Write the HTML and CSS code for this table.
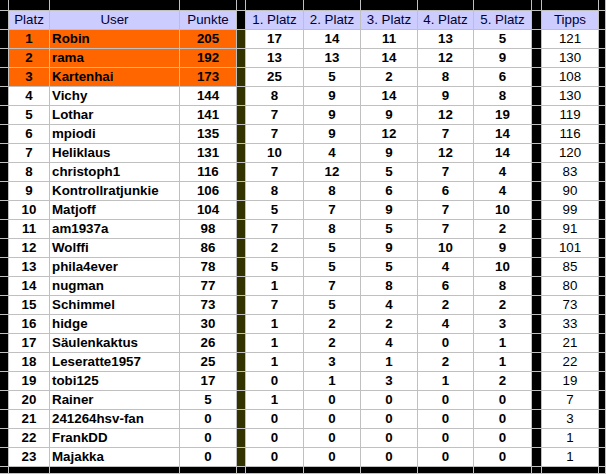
FILE: index.html
```html
<!DOCTYPE html>
<html lang="de">
<head>
<meta charset="utf-8">
<title>Tippspiel Rangliste</title>
<link rel="stylesheet" href="styles.css">
</head>
<body>
<div class="sheet" id="sheet">
  <!-- top band -->
  <div class="bk"></div><div class="bk"></div><div class="bk"></div><div class="bk"></div><div class="bk"></div><div class="bk"></div><div class="bk"></div><div class="bk"></div><div class="bk"></div><div class="bk"></div><div class="bk"></div><div class="bk"></div><div class="bk"></div>
  <!-- header -->
  <div class="bk"></div>
  <div class="hd c">Platz</div>
  <div class="hd c">User</div>
  <div class="hd c">Punkte</div>
  <div class="bk"></div>
  <div class="hd c">1. Platz</div>
  <div class="hd c">2. Platz</div>
  <div class="hd c">3. Platz</div>
  <div class="hd c">4. Platz</div>
  <div class="hd c">5. Platz</div>
  <div class="bk"></div>
  <div class="hd c">Tipps</div>
  <div class="bk"></div>
</div>
<script src="app.js"></script>
</body>
</html>
```

FILE: app.js
```js
var rows = [
  [1,"Robin",205,17,14,11,13,5,121],
  [2,"rama",192,13,13,14,12,9,130],
  [3,"Kartenhai",173,25,5,2,8,6,108],
  [4,"Vichy",144,8,9,14,9,8,130],
  [5,"Lothar",141,7,9,9,12,19,119],
  [6,"mpiodi",135,7,9,12,7,14,116],
  [7,"Heliklaus",131,10,4,9,12,14,120],
  [8,"christoph1",116,7,12,5,7,4,83],
  [9,"Kontrollratjunkie",106,8,8,6,6,4,90],
  [10,"Matjoff",104,5,7,9,7,10,99],
  [11,"am1937a",98,7,8,5,7,2,91],
  [12,"Wolffi",86,2,5,9,10,9,101],
  [13,"phila4ever",78,5,5,5,4,10,85],
  [14,"nugman",77,1,7,8,6,8,80],
  [15,"Schimmel",73,7,5,4,2,2,73],
  [16,"hidge",30,1,2,2,4,3,33],
  [17,"Säulenkaktus",26,1,2,4,0,1,21],
  [18,"Leseratte1957",25,1,3,1,2,1,22],
  [19,"tobi125",17,0,1,3,1,2,19],
  [20,"Rainer",5,1,0,0,0,0,7],
  [21,"241264hsv-fan",0,0,0,0,0,0,3],
  [22,"FrankDD",0,0,0,0,0,0,1],
  [23,"Majakka",0,0,0,0,0,0,1]
];
var sheet = document.getElementById("sheet");
function cell(cls, text) {
  var d = document.createElement("div");
  d.className = cls;
  if (text !== undefined) d.textContent = text;
  sheet.appendChild(d);
}
rows.forEach(function (r) {
  var bg = r[0] <= 3 ? "or" : "wh";
  cell("bk");
  cell(bg + " c b", r[0]);
  cell(bg + " l b", r[1]);
  cell(bg + " c b", r[2]);
  cell("ol");
  for (var i = 3; i < 8; i++) cell("wh c b", r[i]);
  cell("bk");
  cell("wh c", r[8]);
  cell("bk");
});
for (var j = 0; j < 13; j++) cell("bk");
```

FILE: styles.css
```css
html, body {
  margin: 0;
  padding: 0;
  background: #000;
}
body {
  width: 606px;
  height: 474px;
  overflow: hidden;
  font-family: "Liberation Sans", Arial, sans-serif;
  font-size: 13.333px;
  color: #000;
}
.sheet {
  display: grid;
  grid-template-columns: 9px 41px 130px 57px 9px 58px 57px 57px 56px 58px 10px 57px 7px;
  grid-template-rows: 11px repeat(24, 19px) 7px;
}
.sheet > div {
  box-sizing: border-box;
  border-right: 1px solid #c0c0c0;
  border-bottom: 1px solid #c0c0c0;
  line-height: 18px;
  white-space: nowrap;
  overflow: hidden;
}
.bk { background: #000; }
.ol { background: #333300; }
.hd { background: #ccccff; color: #000033; }
.or { background: #ff6600; }
.wh { background: #fff; }
.c { text-align: center; }
.l { text-align: left; padding-left: 2px; }
.b { font-weight: bold; }
```
